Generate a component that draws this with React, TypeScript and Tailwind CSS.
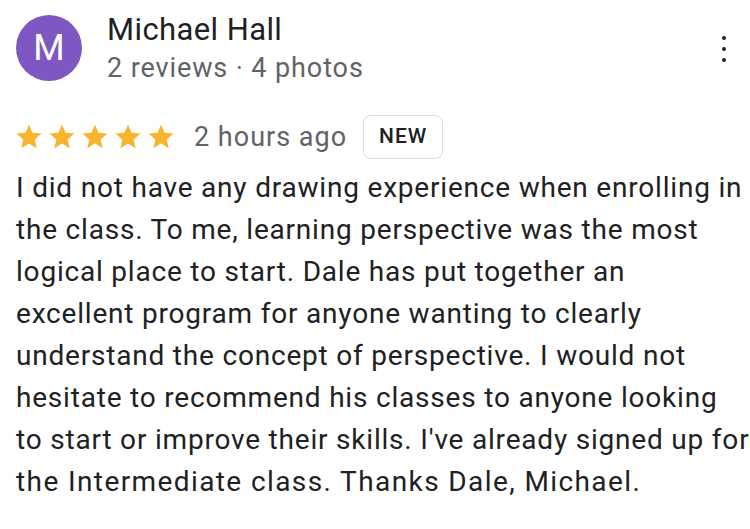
import React from "react";

const lines = [
  "I did not have any drawing experience when enrolling in",
  "the class. To me, learning perspective was the most",
  "logical place to start. Dale has put together an",
  "excellent program for anyone wanting to clearly",
  "understand the concept of perspective. I would not",
  "hesitate to recommend his classes to anyone looking",
  "to start or improve their skills. I've already signed up for",
];

function Star() {
  return (
    <svg viewBox="0 0 24 24" className="w-[30px] h-[30px] shrink-0" fill="#f9b42d">
      <path d="M12 17.27L18.18 21l-1.64-7.03L22 9.24l-7.19-.61L12 2 9.19 8.63 2 9.24l5.46 4.73L5.82 21z" />
    </svg>
  );
}

export default function App() {
  return (
    <div className="w-[750px] h-[529px] bg-white overflow-hidden font-['Roboto',_'Liberation_Sans',_sans-serif] text-[#202124]">
      {/* header */}
      <div className="flex items-start pl-[16px] pr-[20px] pt-[15px]">
        <div className="w-[66px] h-[66px] rounded-full bg-[#7e57c2] text-white flex items-center justify-center text-[36px] shrink-0">
          M
        </div>
        <div className="ml-[25px] flex-1 -mt-[3px]">
          <div className="text-[31px] leading-[36px] tracking-[0.4px]">Michael Hall</div>
          <div className="mt-[2px] text-[27px] leading-[36px] tracking-[0.9px] text-[#5f6368]">2 reviews · 4 photos</div>
        </div>
        <div className="flex flex-col gap-[7px] pt-[21px] pr-[4px]">
          <span className="w-[4px] h-[4px] rounded-full bg-[#202124]" />
          <span className="w-[4px] h-[4px] rounded-full bg-[#202124]" />
          <span className="w-[4px] h-[4px] rounded-full bg-[#202124]" />
        </div>
      </div>

      {/* rating row */}
      <div className="flex items-center pl-[14px] mt-[29px]">
        <div className="flex gap-[3px]">
          <Star />
          <Star />
          <Star />
          <Star />
          <Star />
        </div>
        <span className="ml-[18px] text-[27px] tracking-[1px] text-[#5f6368]">2 hours ago</span>
        <span className="ml-[16px] h-[44px] px-[15px] flex items-center border border-[#dadce0] rounded-[8px] text-[21px] font-medium tracking-[1px] text-[#202124]">
          NEW
        </span>
      </div>

      {/* body */}
      <div className="pl-[16px] mt-[8px] text-[28px] leading-[42px] tracking-[0.8px]">
        {lines.map((l, i) => (
          <div key={i} className="whitespace-nowrap">{l}</div>
        ))}
        <div className="whitespace-nowrap tracking-[1.4px]">the Intermediate class. Thanks Dale, Michael.</div>
      </div>
    </div>
  );
}
